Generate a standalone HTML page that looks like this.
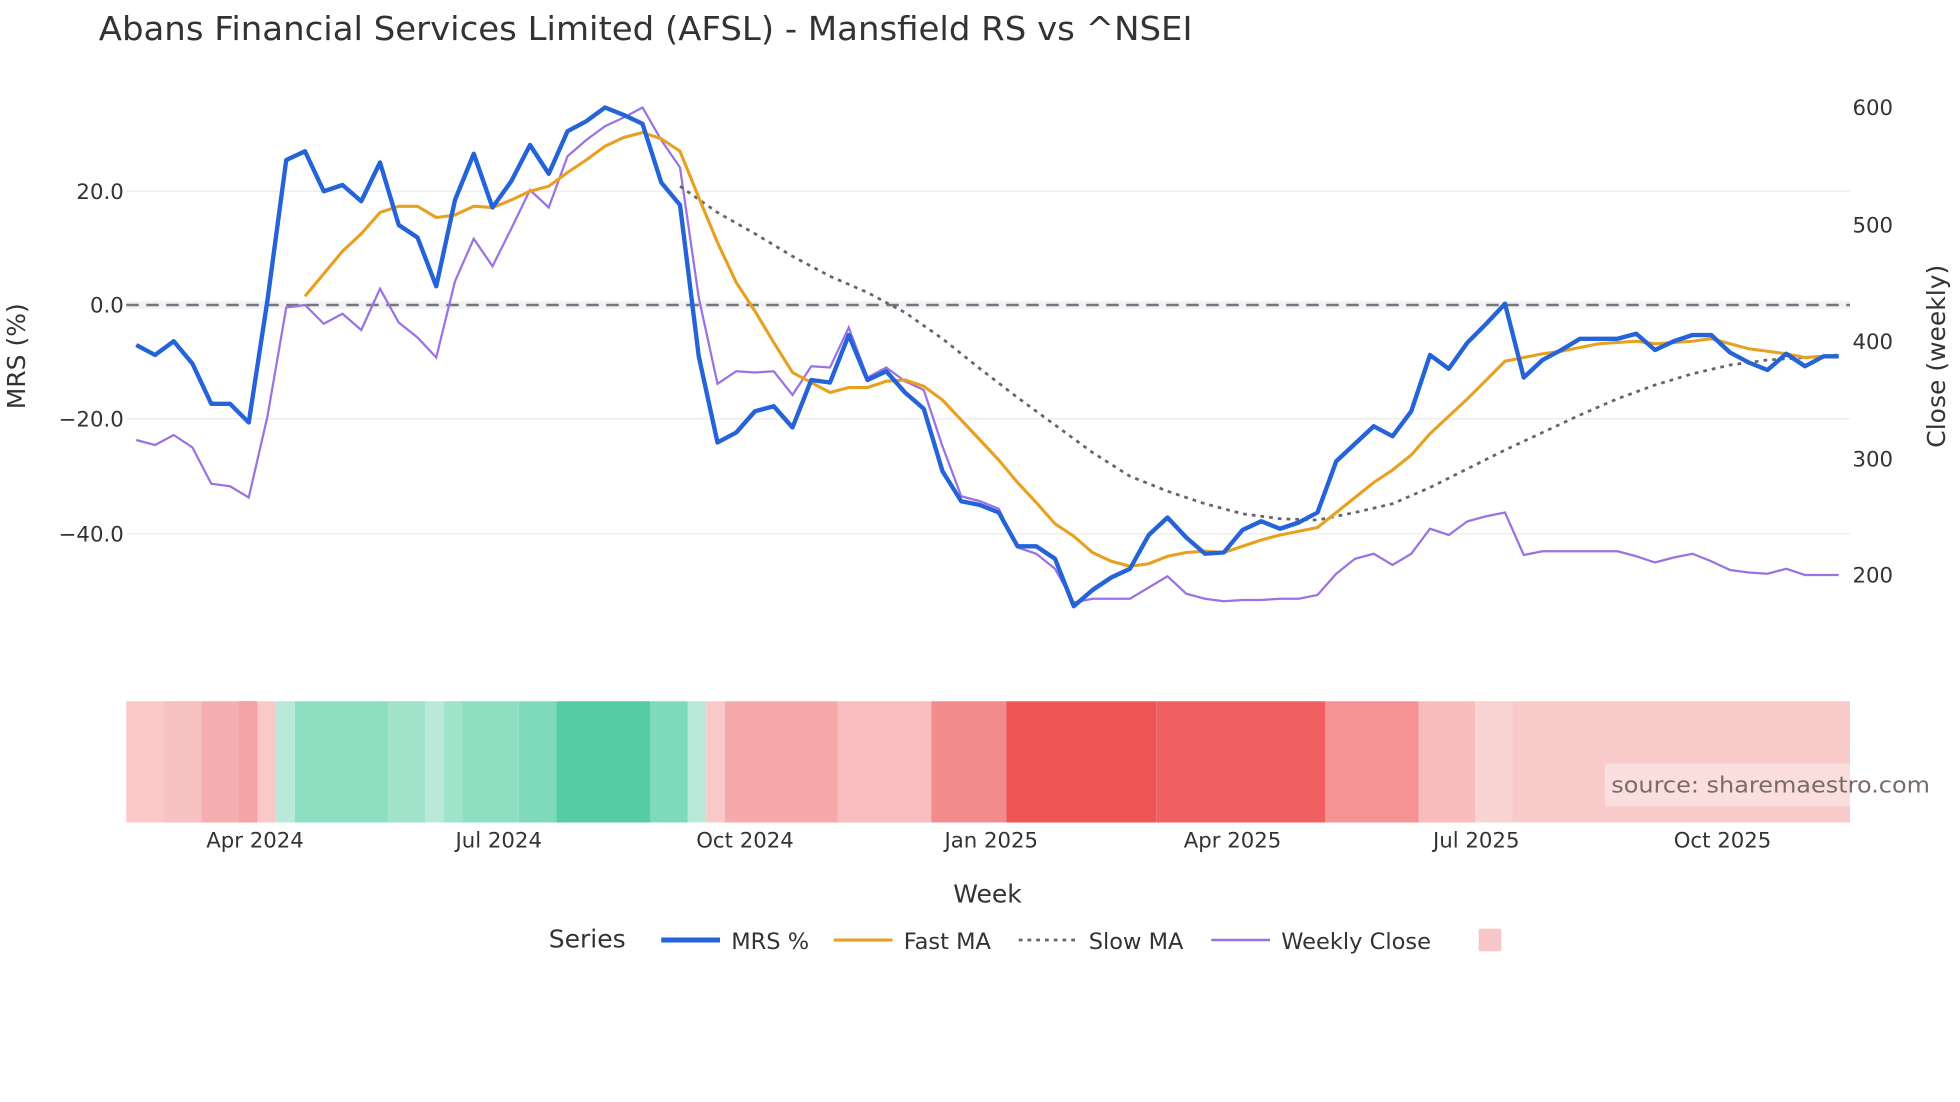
<!DOCTYPE html>
<html><head><meta charset="utf-8"><style>
html,body{margin:0;padding:0;background:#fff;}
svg{display:block;}
text{font-family:"DejaVu Sans","Liberation Sans",sans-serif;}
</style></head><body>
<svg width="1960" height="1102" viewBox="0 0 1568 881.6" xmlns="http://www.w3.org/2000/svg">
<rect width="1568" height="881.6" fill="#fff"/>
<text x="79" y="32" font-size="26" fill="#333" textLength="875" lengthAdjust="spacingAndGlyphs">Abans Financial Services Limited (AFSL) - Mansfield RS vs ^NSEI</text>
<g stroke="#eeeeee" stroke-width="1.2">
<line x1="101" x2="1480" y1="153" y2="153"/>
<line x1="101" x2="1480" y1="335" y2="335"/>
<line x1="101" x2="1480" y1="427" y2="427"/>
</g>
<rect x="101" y="241" width="1379" height="6" fill="#f1f1f8"/>
<line x1="101" x2="1480" y1="244" y2="244" stroke="#777" stroke-width="2" stroke-dasharray="10,6"/>
<g font-size="17" fill="#333" text-anchor="end">
<text x="99" y="159">20.0</text>
<text x="99" y="250">0.0</text>
<text x="99" y="341">−20.0</text>
<text x="99" y="433">−40.0</text>
</g>
<g font-size="17" fill="#333">
<text x="1482" y="92">600</text>
<text x="1482" y="186">500</text>
<text x="1482" y="279">400</text>
<text x="1482" y="373">300</text>
<text x="1482" y="466">200</text>
</g>
<text transform="translate(20,285) rotate(-90)" font-size="20" fill="#333" text-anchor="middle">MRS (%)</text>
<text transform="translate(1556,285) rotate(-90)" font-size="20" fill="#333" text-anchor="middle">Close (weekly)</text>
<g>
<rect x="101" y="561" width="60" height="97" fill="#f9c9ca"/>
<rect x="131" y="561" width="30" height="97" fill="#f8c1c2"/>
<rect x="161" y="561" width="45" height="97" fill="#f4aeaf"/>
<rect x="191" y="561" width="15" height="97" fill="#f5a3a4"/>
<rect x="206" y="561" width="15" height="97" fill="#f9c9ca"/>
<rect x="221" y="561" width="15" height="97" fill="#b8e9d9"/>
<rect x="236" y="561" width="74" height="97" fill="#8ddfc2"/>
<rect x="310" y="561" width="30" height="97" fill="#9ee3ca"/>
<rect x="340" y="561" width="15" height="97" fill="#b8e9d9"/>
<rect x="355" y="561" width="15" height="97" fill="#9ee3ca"/>
<rect x="370" y="561" width="45" height="97" fill="#8ddfc2"/>
<rect x="415" y="561" width="30" height="97" fill="#7fd9bb"/>
<rect x="445" y="561" width="75" height="97" fill="#55cca4"/>
<rect x="520" y="561" width="30" height="97" fill="#7fd9bb"/>
<rect x="550" y="561" width="15" height="97" fill="#b8e9d9"/>
<rect x="565" y="561" width="15" height="97" fill="#f9c9ca"/>
<rect x="580" y="561" width="90" height="97" fill="#f6a9aa"/>
<rect x="670" y="561" width="75" height="97" fill="#f8bdbe"/>
<rect x="745" y="561" width="60" height="97" fill="#f28b8c"/>
<rect x="805" y="561" width="120" height="97" fill="#ef5555"/>
<rect x="925" y="561" width="135" height="97" fill="#f06062"/>
<rect x="1060" y="561" width="75" height="97" fill="#f59394"/>
<rect x="1135" y="561" width="75" height="97" fill="#f8bcbd"/>
<rect x="1180" y="561" width="30" height="97" fill="#fad3d3"/>
<rect x="1210" y="561" width="270" height="97" fill="#f9caca"/>
<rect x="1284" y="611" width="196" height="34" fill="#fbdfdf"/>
<text x="1289" y="634" font-size="18" fill="#7a6a6a" textLength="255" lengthAdjust="spacingAndGlyphs">source: sharemaestro.com</text>
</g>
<g font-size="17" fill="#333" text-anchor="middle">
<text x="204" y="678">Apr 2024</text>
<text x="399" y="678">Jul 2024</text>
<text x="596" y="678">Oct 2024</text>
<text x="793" y="678">Jan 2025</text>
<text x="986" y="678">Apr 2025</text>
<text x="1181" y="678">Jul 2025</text>
<text x="1378" y="678">Oct 2025</text>
</g>
<text x="790" y="722" font-size="20" fill="#333" text-anchor="middle">Week</text>
<polyline fill="none" stroke="#9b72e3" stroke-width="1.8" points="109,352 124,356 139,348 154,358 169,387 184,389 199,398 214,333 229,246 244,244 259,259 274,251 289,264 304,231 319,258 334,270 349,286 364,225 379,191 394,213 409,183 424,152 439,166 454,125 469,112 484,101 499,94 514,86 529,112 544,134 559,238 574,307 589,297 604,298 619,297 634,316 649,293 664,294 679,262 694,302 709,294 724,305 739,312 754,357 769,397 784,401 799,407 814,438 829,443 844,455 859,482 874,479 889,479 904,479 919,470 934,461 949,475 964,479 979,481 994,480 1009,480 1024,479 1039,479 1054,476 1069,459 1084,447 1099,443 1114,452 1129,443 1144,423 1159,428 1174,417 1189,413 1204,410 1219,444 1234,441 1249,441 1264,441 1279,441 1294,441 1309,445 1324,450 1339,446 1354,443 1369,449 1384,456 1399,458 1414,459 1429,455 1444,460 1459,460 1471,460"/>
<polyline fill="none" stroke="#666" stroke-width="2.2" stroke-dasharray="3,4" points="544,149 574,170 604,187 634,205 664,221 694,234 724,250 754,271 784,295 814,318 844,340 874,362 904,381 934,393 964,403 994,411 1024,415 1054,416 1084,410 1114,403 1144,390 1174,375 1204,360 1234,346 1264,332 1294,319 1324,308 1354,299 1384,292 1414,288 1444,286 1471,284"/>
<polyline fill="none" stroke="#e8a020" stroke-width="2.5" points="244,237 259,219 274,201 289,187 304,170 319,165 334,165 349,174 364,172 379,165 394,166 409,160 424,153 439,149 454,138 469,128 484,117 499,110 514,106 529,111 544,121 559,158 574,194 589,226 604,249 619,274 634,298 649,306 664,314 679,310 694,310 709,305 724,304 739,309 754,320 769,336 784,352 799,368 814,386 829,402 844,419 859,429 874,442 889,449 904,453 919,451 934,445 949,442 964,441 979,442 994,437 1009,432 1024,428 1039,425 1054,422 1069,410 1084,398 1099,386 1114,376 1129,364 1144,347 1159,333 1174,319 1189,304 1204,289 1219,286 1234,283 1249,281 1264,278 1279,275 1294,274 1309,273 1324,275 1339,274 1354,273 1369,271 1384,275 1399,279 1414,281 1429,283 1444,286 1459,285 1471,285"/>
<polyline fill="none" stroke="#2563d9" stroke-width="3.5" stroke-linejoin="round" points="109,276 124,284 139,273 154,291 169,323 184,323 199,338 214,240 229,128 244,121 259,153 274,148 289,161 304,130 319,180 334,190 349,229 364,160 379,123 394,166 409,145 424,116 439,139 454,105 469,97 484,86 499,92 514,99 529,146 544,164 559,285 574,354 589,346 604,329 619,325 634,342 649,304 664,306 679,268 694,304 709,297 724,314 739,327 754,377 769,401 784,404 799,410 814,437 829,437 844,447 859,485 874,472 889,462 904,455 919,428 934,414 949,430 964,443 979,442 994,424 1009,417 1024,423 1039,418 1054,410 1069,369 1084,355 1099,341 1114,349 1129,329 1144,284 1159,295 1174,274 1189,259 1204,243 1219,302 1234,288 1249,280 1264,271 1279,271 1294,271 1309,267 1324,280 1339,273 1354,268 1369,268 1384,282 1399,290 1414,296 1429,283 1444,293 1459,285 1471,285"/>
<text x="439" y="758" font-size="20" fill="#333">Series</text>
<line x1="529" x2="576" y1="752" y2="752" stroke="#2563d9" stroke-width="4"/>
<text x="585" y="759" font-size="18" fill="#333">MRS %</text>
<line x1="667" x2="714" y1="752" y2="752" stroke="#e8a020" stroke-width="2.5"/>
<text x="723" y="759" font-size="18" fill="#333">Fast MA</text>
<line x1="815" x2="860" y1="752" y2="752" stroke="#666" stroke-width="2.2" stroke-dasharray="3,4"/>
<text x="871" y="759" font-size="18" fill="#333">Slow MA</text>
<line x1="969" x2="1016" y1="752" y2="752" stroke="#9b72e3" stroke-width="2"/>
<text x="1025" y="759" font-size="18" fill="#333">Weekly Close</text>
<rect x="1183" y="743" width="18" height="18" fill="#f6c6c8"/>
</svg>
</body></html>
